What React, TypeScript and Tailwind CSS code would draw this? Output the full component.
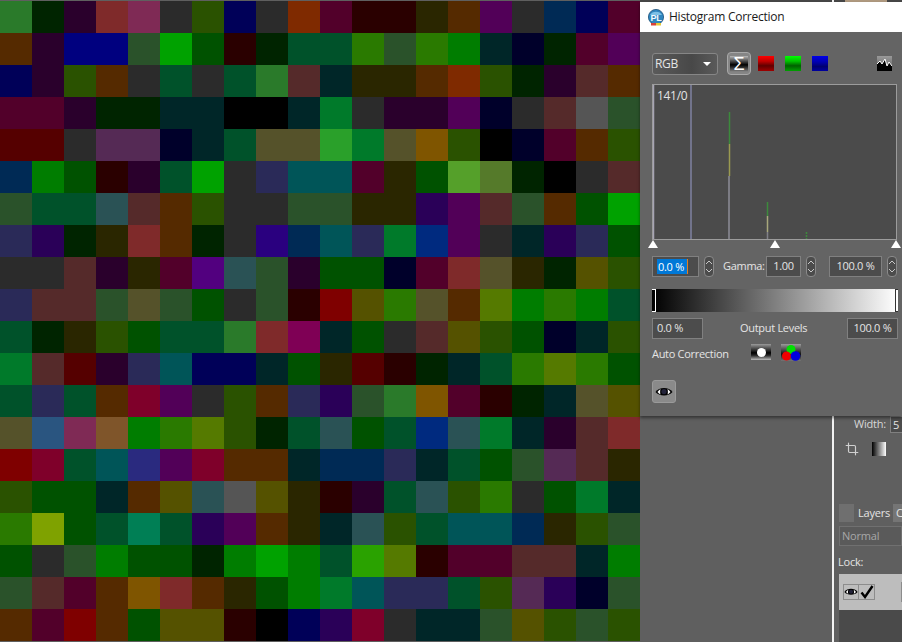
import { Crop } from 'lucide-react';
import clsx from 'clsx';

const cellColors: Record<string, string> = {
  '000000': 'bg-[#000000]',
  '00002a': 'bg-[#00002a]',
  '000055': 'bg-[#000058]',
  '00007f': 'bg-[#00007f]',
  '002a00': 'bg-[#002400]',
  '002a2a': 'bg-[#002628]',
  '002a55': 'bg-[#002a55]',
  '002a7f': 'bg-[#002a7f]',
  '005500': 'bg-[#005200]',
  '00552a': 'bg-[#00522a]',
  '00555a': 'bg-[#005558]',
  '007f00': 'bg-[#007d00]',
  '007f2a': 'bg-[#007a2a]',
  '007f55': 'bg-[#007f55]',
  '00a000': 'bg-[#00a200]',
  '2a0000': 'bg-[#2a0000]',
  '2a002a': 'bg-[#2a002c]',
  '2a0055': 'bg-[#2a0058]',
  '2a007f': 'bg-[#2a007f]',
  '2a2a00': 'bg-[#2a2600]',
  '2a2a2a': 'bg-[#2b2b2b]',
  '2a2a55': 'bg-[#2a2a58]',
  '2a2a7f': 'bg-[#2a2a7f]',
  '2a5500': 'bg-[#2a5200]',
  '2a552a': 'bg-[#2a522a]',
  '2a5555': 'bg-[#2a5255]',
  '2a5580': 'bg-[#2a5580]',
  '2a7f00': 'bg-[#2a7a00]',
  '2a7f2a': 'bg-[#2a7a2a]',
  '2aa000': 'bg-[#2aa200]',
  '2aa02a': 'bg-[#2aa02a]',
  '500000': 'bg-[#550000]',
  '55002a': 'bg-[#52002a]',
  '550055': 'bg-[#520058]',
  '50007f': 'bg-[#52007f]',
  '552a00': 'bg-[#552a00]',
  '552a2a': 'bg-[#552a2a]',
  '552a55': 'bg-[#552a55]',
  '555500': 'bg-[#555200]',
  '55552a': 'bg-[#55522a]',
  '555555': 'bg-[#555555]',
  '55a02a': 'bg-[#55a02a]',
  '557f00': 'bg-[#557a00]',
  '557f2a': 'bg-[#557a2a]',
  '7f0000': 'bg-[#7f0000]',
  '7f002a': 'bg-[#7f002a]',
  '7f0055': 'bg-[#7f0055]',
  '7f2a00': 'bg-[#7f2a00]',
  '7f2a2a': 'bg-[#7f2a2a]',
  '7f2a55': 'bg-[#7f2a55]',
  '7f552a': 'bg-[#7f552a]',
  '7f5500': 'bg-[#7f5500]',
  '7fa000': 'bg-[#7fa200]',
};

const mosaic = `
2a7f2a 002a00 2a002a 7f2a2a 7f2a55 2a2a2a 2a5500 000055 2a2a2a 7f2a00 55002a 2a0000 2a0000 2a2a00 552a00 550055 2a2a2a 002a55 000055 55002a
552a00 2a002a 00007f 00007f 2a552a 00a000 005500 2a0000 002a00 00552a 00552a 2a7f00 2a552a 2a7f00 007f00 002a2a 00002a 002a00 55002a 550055
000055 2a002a 2a5500 552a00 2a2a2a 00552a 2a2a2a 00552a 2a7f2a 552a2a 002a2a 2a2a00 2a2a00 552a00 7f2a00 2a5500 002a00 2a002a 552a2a 552a00
55002a 55002a 2a002a 002a00 002a00 002a2a 002a2a 000000 000000 002a2a 007f2a 2a2a2a 2a002a 2a002a 550055 00002a 2a2a2a 552a2a 555555 2a552a
500000 500000 2a2a2a 552a55 552a55 00002a 002a2a 00552a 55552a 55552a 2aa02a 007f2a 55552a 7f5500 2a5500 000000 00002a 55002a 552a00 2a5500
002a55 007f00 005500 2a0000 2a002a 00552a 00a000 2a2a2a 2a2a55 00555a 00555a 55002a 2a2a00 005500 55a02a 557f2a 002a00 000000 2a2a2a 552a2a
2a552a 00552a 00552a 2a5555 552a2a 552a00 2a5500 2a2a2a 2a2a2a 2a552a 2a552a 2a2a00 2a2a00 2a0055 550055 552a2a 2a552a 552a00 005500 00a000
2a2a55 2a0055 002a00 2a2a00 7f2a2a 552a00 002a00 2a2a2a 2a007f 002a55 00555a 2a2a55 007f2a 002a7f 550055 2a2a2a 002a2a 2a0055 2a2a55 005500
2a2a2a 2a2a2a 552a2a 2a002a 2a2a00 55002a 50007f 2a5555 2a552a 2a002a 005500 005500 00002a 55002a 7f2a2a 55552a 2a2a00 002a00 555500 2a5500
2a2a55 552a2a 552a2a 2a552a 55552a 2a552a 005500 2a2a2a 2a552a 2a0000 7f0000 555500 2a7f00 55552a 552a00 557f00 007f00 2a7f00 007f00 00552a
00552a 002a00 2a2a00 2a5500 005500 00552a 00552a 2a7f2a 7f2a2a 7f0055 002a2a 005500 2a2a2a 552a2a 555500 2a5500 005500 00002a 002a2a 2a5500
007f2a 552a2a 500000 2a002a 2a2a55 00555a 000055 000055 002a2a 005500 2a2a00 500000 2a0000 002a00 002a2a 00552a 2a7f00 557f00 2a7f00 005500
00552a 2a2a55 00552a 552a00 7f002a 550055 2a2a2a 2a5500 552a00 2a2a55 2a0055 2a552a 2a7f2a 7f5500 55002a 2a0000 002a00 002a2a 55552a 555500
55552a 2a5580 7f2a55 7f552a 007f00 2a7f00 557f00 2a5500 002a00 00552a 2a5555 005500 00552a 002a7f 2a5555 007f2a 002a2a 2a002a 552a2a 7f2a2a
7f0000 7f002a 00552a 00555a 2a2a7f 550055 7f002a 552a00 552a00 002a2a 002a55 002a55 2a2a55 002a2a 00552a 005500 2a552a 552a55 552a2a 2a2a00
2a5500 005500 005500 002a2a 552a00 555500 2a5555 555555 555500 2a2a00 2a0000 2a002a 00552a 2a5555 2a5500 2a7f00 2a2a2a 005500 007f2a 002a2a
2a7f00 7fa000 005500 00552a 007f55 00552a 2a0055 550055 552a00 2a2a00 002a2a 2a5555 2a5500 00552a 00555a 00555a 002a55 2a2a00 2a5500 2a552a
005500 2a2a2a 2a552a 007f00 005500 005500 002a00 007f00 00a000 007f00 00552a 2aa000 557f00 2a0000 55002a 55002a 552a2a 552a2a 002a2a 007f00
2a552a 552a2a 55002a 552a00 7f5500 7f2a2a 552a00 2a2a00 005500 007f00 007f2a 00555a 2a2a55 2a2a55 00552a 2a5500 552a55 2a0055 00002a 2a552a
552a00 55002a 7f0000 552a00 005500 555500 555500 2a0000 000000 000055 2a0055 7f002a 2a2a2a 002a2a 002a2a 2a552a 555500 2a5500 2a552a 2a5500
`
  .trim()
  .split(/\s+/);

function Spinner() {
  return (
    <div className="w-[10px] h-[21px] rounded-[4px] border border-[#8a8a8a] bg-[#4c4c4c] flex items-center justify-center">
      <svg width="8" height="15" viewBox="0 0 8 15" fill="none" stroke="#c8c8c8" strokeWidth="1">
        <path d="M1 5 L4 2 L7 5" />
        <path d="M1 10 L4 13 L7 10" />
      </svg>
    </div>
  );
}

function Field({ value, className }: { value: string; className: string }) {
  return (
    <div
      className={clsx(
        'h-[21px] border border-[#808080] bg-[#4c4c4c] text-[#e4e4e4] flex items-center justify-center',
        className,
      )}
    >
      {value}
    </div>
  );
}

function EyeIcon({ className }: { className?: string }) {
  return (
    <svg className={className} viewBox="0 0 18 12">
      <path d="M0.5 6 C4 0.5 14 0.5 17.5 6 C14 10.5 4 10.5 0.5 6 Z" fill="#000" />
      <path d="M2.5 6 C3.5 4.5 4.5 3.5 5.5 3 C5 5 5 7 5.5 8.5 C4.5 8 3.5 7 2.5 6 Z" fill="#fff" />
      <path d="M15.5 6 C14.5 4.5 13.5 3.5 12.5 3 C13 5 13 7 12.5 8.5 C13.5 8 14.5 7 15.5 6 Z" fill="#fff" />
      <circle cx="9" cy="5.6" r="2.6" fill="#23233a" />
    </svg>
  );
}

function HistogramDialog() {
  return (
    <div className="absolute left-[640px] top-[2px] w-[262px] h-[414px] bg-[#646464] shadow-[0_2px_3px_rgba(0,0,0,0.45)] flex flex-col font-['Open_Sans',sans-serif] text-[11px] tracking-[-0.3px] text-[#e4e4e4]">
      <div className="h-[30px] shrink-0 bg-white flex items-center gap-[5px] pl-2 text-[12px] text-[#1a1a1a] tracking-[-0.25px]">
        <svg width="16" height="17" viewBox="0 0 16 17">
          <circle cx="8" cy="8" r="7.6" fill="#2f86bf" stroke="#1c4f78" strokeWidth="0.8" />
          <path d="M2 6 C4 1.5 12 1.5 14 6 Z" fill="#7cc0e6" />
          <rect x="3" y="14" width="5" height="2.5" fill="#d8413a" />
          <rect x="8" y="14" width="5" height="2.5" fill="#e6c83a" />
          <text x="8" y="11.5" textAnchor="middle" fontSize="9" fontWeight="700" fill="#f2fafe" fontFamily="Liberation Sans, sans-serif">
            PL
          </text>
        </svg>
        <span>Histogram Correction</span>
      </div>

      <div className="flex flex-col pl-3 pt-5">
        <div className="h-[23px] flex items-center">
          <div className="w-[66px] h-[22px] rounded-[3px] border border-[#868686] bg-[linear-gradient(90deg,#5a5a5a,#484848_60%,#5a5a5a)] flex items-center justify-between pl-[2px] pr-[6px] text-[12px]">
            <span>RGB</span>
            <span className="w-0 h-0 border-x-[4px] border-x-transparent border-t-[4px] border-t-white" />
          </div>
          <div className="ml-[9px] w-[24px] h-[23px] rounded-[4px] border border-[#a8a8a8] bg-[#858585] flex items-center justify-center">
            <div className="w-[18px] h-[16px] bg-[linear-gradient(180deg,#b8b8b8,#000_55%,#3a3a3a_75%,#8a8a8a)] flex items-center justify-center text-[18px] leading-none text-white font-['Liberation_Sans',sans-serif]">
              Σ
            </div>
          </div>
          <div className="ml-[7px] w-[16px] h-[15px] bg-[linear-gradient(180deg,#ff0000,#c00000_35%,#600000_65%,#a00000)]" />
          <div className="ml-[11px] w-[16px] h-[15px] bg-[linear-gradient(180deg,#00ff00,#00c000_35%,#006000_65%,#00a000)]" />
          <div className="ml-[11px] w-[16px] h-[15px] bg-[linear-gradient(180deg,#0000e8,#0000b0_40%,#000070_70%,#0000a0)]" />
          <div className="ml-[49px] w-[15px] h-[15px] bg-[linear-gradient(180deg,#9a9a9a,#5c5c5c)]">
            <svg width="15" height="15" viewBox="0 0 15 15">
              <path d="M0 15 V8 L3 5 L5 8 L8 3 L10 10 L12 6 L15 10 V15 Z" fill="#000" />
              <path d="M0 8 L3 5 L5 8 L8 3 L10 10 L12 6 L15 10" fill="none" stroke="#fff" strokeWidth="1" />
            </svg>
          </div>
        </div>

        <div className="mt-[9px] w-[245px] h-[156px] relative border border-[#9c9c9c] bg-[#4b4b4b]">
          <svg className="w-full h-full" viewBox="0 0 243 154">
            <g strokeWidth="1.5" fill="none">
              <path d="M0.5 0 V154" stroke="#a7a4b4" />
              <path d="M38 0 V154" stroke="#72748c" strokeWidth="2" />
              <path d="M76.5 27 V59" stroke="#3c8a3c" />
              <path d="M76.5 59 V91" stroke="#9a9a50" />
              <path d="M76 91 V154" stroke="#7c7c84" strokeWidth="2" />
              <path d="M114.5 117 V131" stroke="#3c8a3c" />
              <path d="M114.5 131 V147" stroke="#a8a87c" />
              <path d="M114.5 147 V154" stroke="#808088" />
              <path d="M153.5 147 V154" stroke="#3c8a3c" strokeDasharray="2 1" />
            </g>
          </svg>
          <span className="absolute left-1 top-[2px] text-[12px]">141/0</span>
        </div>

        <div className="-ml-1 mt-0 w-[253px] h-[10px] flex justify-between">
          {[0, 1, 2].map((i) => (
            <span
              key={i}
              className="w-0 h-0 border-x-[5px] border-x-transparent border-b-[8px] border-b-white"
            />
          ))}
        </div>

        <div className="mt-[6px] h-[21px] flex items-center">
          <div className="w-[47px] h-[21px] border border-[#808080] bg-[#4c4c4c] flex items-center pl-1">
            <span className="w-[31px] bg-[#0078d7] text-white h-[15px] leading-[15px] px-px border-r border-[#e08020]">0.0 %</span>
          </div>
          <div className="ml-[5px]">
            <Spinner />
          </div>
          <span className="ml-[9px] w-[43px]">Gamma:</span>
          <Field value="1.00" className="w-[35px]" />
          <div className="ml-[5px]">
            <Spinner />
          </div>
          <Field value="100.0 %" className="ml-[13px] w-[53px]" />
          <div className="ml-[5px]">
            <Spinner />
          </div>
        </div>

        <div className="mt-3 w-[246px] h-[23px] relative bg-[linear-gradient(90deg,#000,#fff)]">
          <div className="absolute left-0 top-0 w-1 h-full border-y border-r border-white" />
          <div className="absolute right-0 top-0 w-[3px] h-full border-y border-l border-[#333]" />
        </div>

        <div className="mt-[6px] h-[21px] flex items-center">
          <Field value="0.0 %" className="w-[51px] !justify-start pl-1" />
          <span className="ml-[37px] w-[107px]">Output Levels</span>
          <Field value="100.0 %" className="w-[51px]" />
        </div>

        <div className="mt-[5px] h-[18px] flex items-start">
          <span className="w-[99px] leading-[20px]">Auto Correction</span>
          <div className="w-[20px] h-[16px] bg-[linear-gradient(180deg,#9a9a9a,#000_55%,#222_70%,#bbb)] flex items-center justify-center">
            <span className="w-[9px] h-[9px] rounded-full bg-white" />
          </div>
          <div className="ml-[10px] w-[20px] h-[17px]  bg-[linear-gradient(180deg,#9a9a9a,#111_60%,#777)]">
            <svg width="20" height="17" viewBox="0 0 20 17">
              <circle cx="10" cy="5.5" r="4.5" fill="#00e000" />
              <circle cx="5.5" cy="12" r="4.5" fill="#f00000" />
              <circle cx="14.5" cy="12" r="4.8" fill="#0000e0" />
            </svg>
          </div>
        </div>

        <div className="mt-[18px] w-[24px] h-[23px] rounded-[3px] bg-[#8a8a8a] border border-[#9a9a9a] flex items-center justify-center">
          <EyeIcon className="w-[18px] h-[12px]" />
        </div>
      </div>
    </div>
  );
}

function SidePanel() {
  return (
    <div className="w-[68px] h-[642px] overflow-hidden flex flex-col font-['Open_Sans',sans-serif] text-[11px] tracking-[-0.2px] text-[#e4e4e4]">
      <div className="h-[2px] shrink-0 bg-[#474747] pl-[11px]">
        <div className="h-full w-[42px] bg-[#b09a80]" />
      </div>
      <div className="mt-[414px] h-[17px] flex items-center shrink-0">
        <span className="ml-[20px] w-[36px] shrink-0 text-[#d8d8d8]">Width:</span>
        <div className="w-[20px] h-[17px] shrink-0 border border-[#808080] bg-[#4c4c4c] pl-[2px] leading-[15px]">5</div>
      </div>
      <div className="mt-[9px] h-[14px] flex items-center shrink-0">
        <Crop className="ml-[11px] text-[#d0d0d0] shrink-0" size={14} strokeWidth={2} />
        <div className="ml-[13px] w-[14px] h-[14px] shrink-0 bg-[linear-gradient(90deg,#000,#fff)]" />
      </div>
      <div className="mt-[48px] h-[18px] flex items-center shrink-0">
        <div className="ml-[5px] w-[15px] h-[18px] shrink-0 bg-[#6f6f6f]" />
        <span className="ml-[4px] w-[34px] shrink-0">Layers</span>
        <div className="ml-[1px] w-[20px] h-[18px] shrink-0 bg-[#757575] pl-[3px] leading-[18px]">C</div>
      </div>
      <div className="mt-[4px] ml-[5px] h-[20px] border border-[#707070] bg-[#5a5a5a] pl-[2px] leading-[18px] text-[#a8a8a8] shrink-0">
        Normal
      </div>
      <div className="mt-[8px] ml-[4px] h-[16px] leading-[16px] shrink-0">Lock:</div>
      <div className="mt-[4px] ml-[5px] h-[36px] bg-[#bdbdbd] flex items-center pl-1 shrink-0">
        <div className="w-[16px] h-[16px] shrink-0 border border-[#8c8c8c] flex items-center justify-center">
          <EyeIcon className="w-[15px] h-[10px]" />
        </div>
        <div className="w-[16px] h-[16px] shrink-0 border border-l-0 border-[#8c8c8c] flex items-center justify-center">
          <svg width="14" height="14" viewBox="0 0 14 14" fill="none" stroke="#000" strokeWidth="2.4">
            <path d="M1.5 7.5 L5 12 L12.5 1" />
          </svg>
        </div>
        <div className="ml-[26px] w-px h-[20px] shrink-0 bg-[#8c8c8c]" />
      </div>
      <div className="ml-[5px] flex-1 bg-[#4a4a4a]" />
    </div>
  );
}

export default function App() {
  return (
    <div className="relative w-[902px] h-[642px] overflow-hidden bg-[#5f5f5f] flex">
      <div className="w-[640px] pt-px grid grid-cols-[repeat(20,32px)] auto-rows-[32px] content-start">
        {mosaic.map((color, index) => (
          <div key={index} className={cellColors[color]} />
        ))}
      </div>
      <div className="w-[192px]">
        <div className="h-[2px] bg-[#474747]" />
      </div>
      <div className="w-[2px] bg-[#f2f2f2]" />
      <SidePanel />
      <HistogramDialog />
    </div>
  );
}
